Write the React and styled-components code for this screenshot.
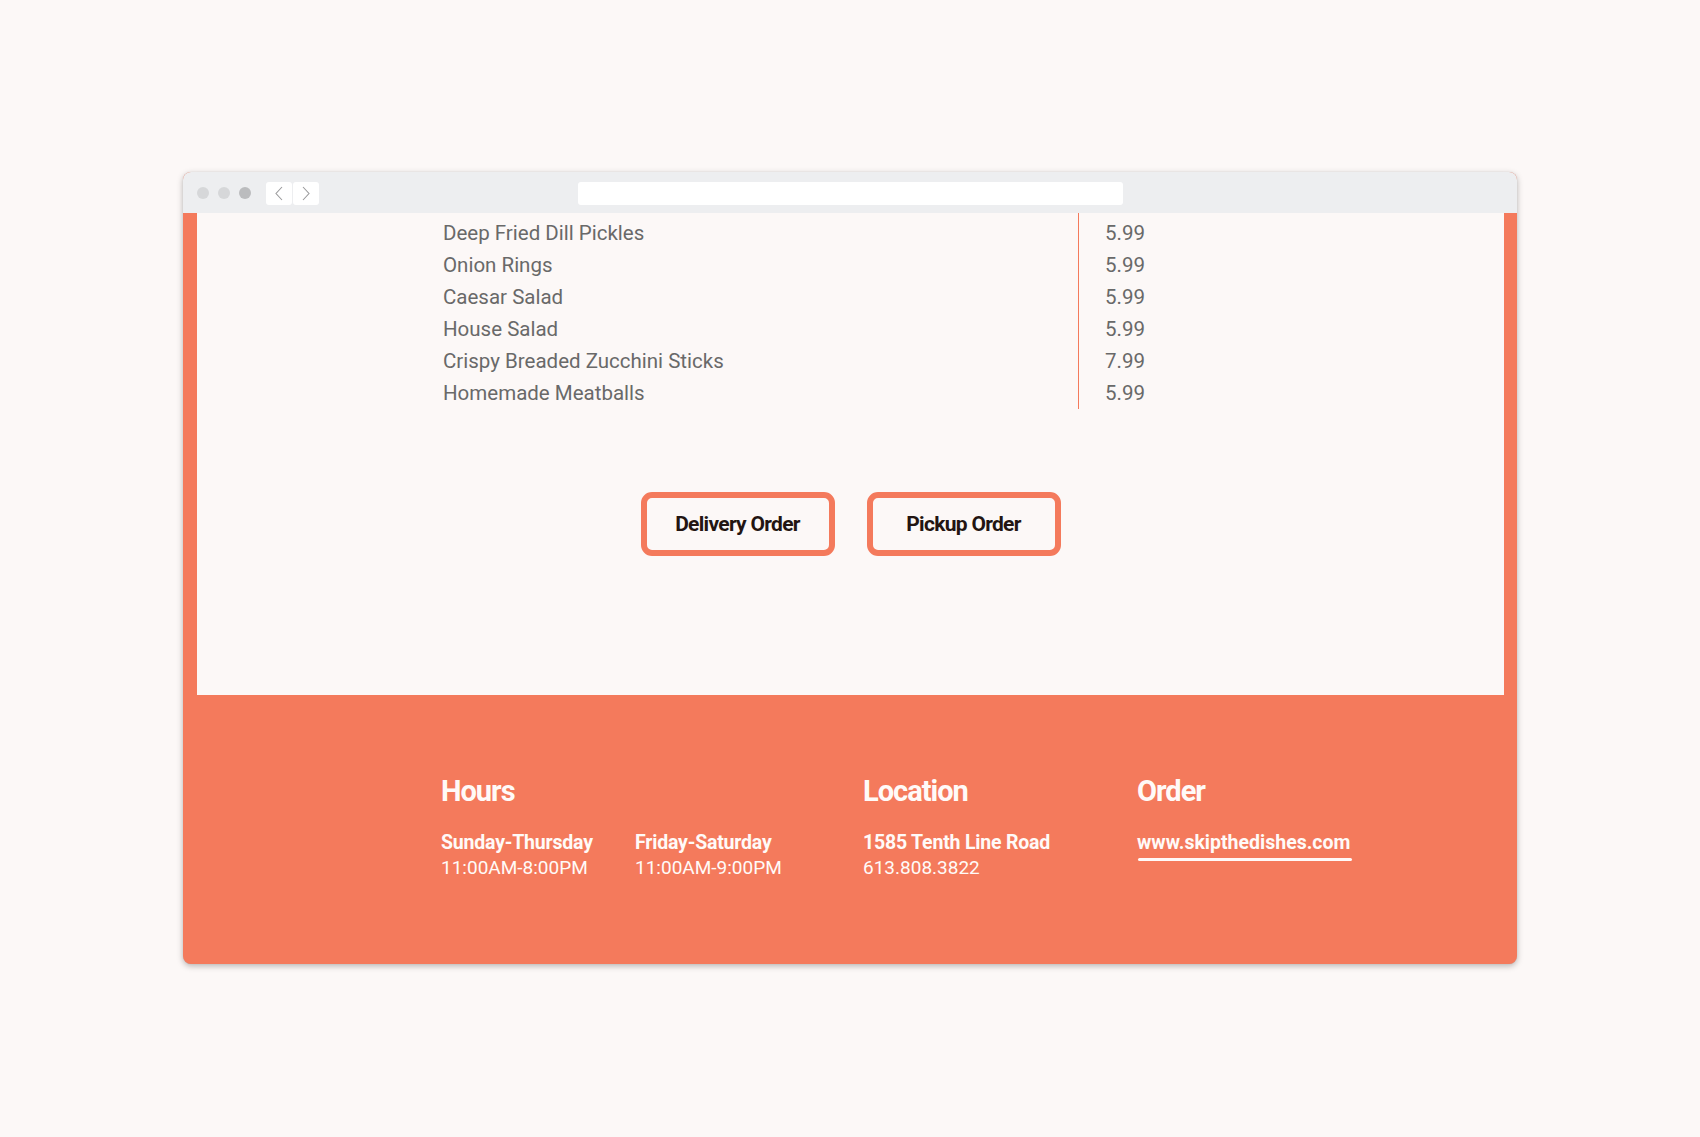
import React from "react";
import styled, { createGlobalStyle } from "styled-components";

const orange = "#f47a5c";
const paper = "#fcf8f7";

const GlobalStyle = createGlobalStyle`
  body {
    margin: 0;
    background: ${paper};
    font-family: Roboto, "Liberation Sans", sans-serif;
  }
`;

const Page = styled.div`
  min-height: 1137px;
  padding-top: 172px;
  box-sizing: border-box;
`;

const Window = styled.div`
  width: 1334px;
  height: 792px;
  margin: 0 auto;
  background: ${orange};
  border-radius: 8px;
  overflow: hidden;
  display: flex;
  flex-direction: column;
  box-shadow: 0 2px 6px rgba(0, 0, 0, 0.28), 0 0 1px rgba(0, 0, 0, 0.15);
`;

const Toolbar = styled.div`
  height: 41px;
  flex-shrink: 0;
  background: #edeef0;
  display: flex;
  align-items: center;
  padding-left: 14px;
  padding-top: 1px;
  box-sizing: border-box;
`;

const Dot = styled.span`
  width: 12px;
  height: 12px;
  border-radius: 50%;
  margin-right: 9px;
  background: ${(p) => (p.dark ? "#bbbcbe" : "#d6d7d9")};
`;

const NavGroup = styled.div`
  display: flex;
  gap: 1px;
  margin-left: 6px;
`;

const NavButton = styled.div`
  width: 26px;
  height: 23px;
  background: #ffffff;
  border-radius: 3px;
  display: flex;
  align-items: center;
  justify-content: center;
`;

const Address = styled.div`
  width: 545px;
  height: 23px;
  margin-left: 259px;
  background: #ffffff;
  border-radius: 3px;
`;

const Content = styled.div`
  height: 482px;
  flex-shrink: 0;
  margin: 0 13px 0 14px;
  background: ${paper};
  display: flex;
  flex-direction: column;
`;

const Menu = styled.div`
  display: grid;
  grid-template-columns: 636px auto;
  margin-left: 246px;
`;

const Names = styled.div`
  border-right: 1.5px solid ${orange};
  padding-top: 4px;
`;

const Prices = styled.div`
  padding-top: 4px;
  padding-left: 26px;
`;

const Line = styled.div`
  font-size: 20.5px;
  line-height: 32px;
  height: 32px;
  color: #696969;
  white-space: nowrap;
`;

const Actions = styled.div`
  display: flex;
  justify-content: center;
  gap: 32px;
  margin-top: 83px;
`;

const OrderButton = styled.button`
  width: 194px;
  height: 64px;
  border: 6px solid ${orange};
  border-radius: 11px;
  background: ${paper};
  color: #231512;
  font-family: Roboto, sans-serif;
  font-weight: 700;
  font-size: 21px;
  letter-spacing: -0.7px;
  padding: 0;
  cursor: pointer;
`;

const Footer = styled.div`
  flex: 1;
  display: flex;
  padding: 79px 0 0 258px;
  color: #fffaf8;
`;

const Column = styled.div`
  width: ${(p) => p.w}px;
  flex-shrink: 0;
`;

const Heading = styled.h2`
  margin: 0 0 21px;
  font-family: Roboto, sans-serif;
  font-weight: 700;
  font-size: 29px;
  letter-spacing: -1px;
  line-height: 35px;
`;

const SubRow = styled.div`
  display: flex;
`;

const SubCol = styled.div`
  width: ${(p) => p.w || "auto"}px;
`;

const Strong = styled.div`
  font-size: 19.5px;
  line-height: 25px;
  font-weight: 700;
  letter-spacing: -0.2px;
`;

const Plain = styled.div`
  font-size: 19px;
  line-height: 25px;
`;

const Link = styled.a`
  display: inline-block;
  font-size: 19.5px;
  line-height: 25px;
  font-weight: 700;
  color: inherit;
  text-decoration: none;
  position: relative;
  &::after {
    content: "";
    position: absolute;
    left: 1px;
    right: -2px;
    bottom: -6px;
    height: 3.5px;
    border-radius: 2px;
    background: #fffaf8;
  }
`;

const Chevron = ({ dir }) => (
  <svg width="10" height="15" viewBox="0 0 10 15">
    <polyline
      points={dir === "left" ? "8,1 2,7.5 8,14" : "2,1 8,7.5 2,14"}
      fill="none"
      stroke="#9a9a9c"
      strokeWidth="1.1"
    />
  </svg>
);

const items = [
  ["Deep Fried Dill Pickles", "5.99"],
  ["Onion Rings", "5.99"],
  ["Caesar Salad", "5.99"],
  ["House Salad", "5.99"],
  ["Crispy Breaded Zucchini Sticks", "7.99"],
  ["Homemade Meatballs", "5.99"],
];

export default function App() {
  return (
    <Page>
      <GlobalStyle />
      <Window>
        <Toolbar>
          <Dot />
          <Dot />
          <Dot dark />
          <NavGroup>
            <NavButton>
              <Chevron dir="left" />
            </NavButton>
            <NavButton>
              <Chevron dir="right" />
            </NavButton>
          </NavGroup>
          <Address />
        </Toolbar>
        <Content>
          <Menu>
            <Names>
              {items.map(([name]) => (
                <Line key={name}>{name}</Line>
              ))}
            </Names>
            <Prices>
              {items.map(([name, price]) => (
                <Line key={name}>{price}</Line>
              ))}
            </Prices>
          </Menu>
          <Actions>
            <OrderButton>Delivery Order</OrderButton>
            <OrderButton>Pickup Order</OrderButton>
          </Actions>
        </Content>
        <Footer>
          <Column w={422}>
            <Heading>Hours</Heading>
            <SubRow>
              <SubCol w={194}>
                <Strong>Sunday-Thursday</Strong>
                <Plain>11:00AM-8:00PM</Plain>
              </SubCol>
              <SubCol>
                <Strong>Friday-Saturday</Strong>
                <Plain>11:00AM-9:00PM</Plain>
              </SubCol>
            </SubRow>
          </Column>
          <Column w={274}>
            <Heading>Location</Heading>
            <Strong>1585 Tenth Line Road</Strong>
            <Plain>613.808.3822</Plain>
          </Column>
          <Column w={300}>
            <Heading>Order</Heading>
            <Link href="#">www.skipthedishes.com</Link>
          </Column>
        </Footer>
      </Window>
    </Page>
  );
}
